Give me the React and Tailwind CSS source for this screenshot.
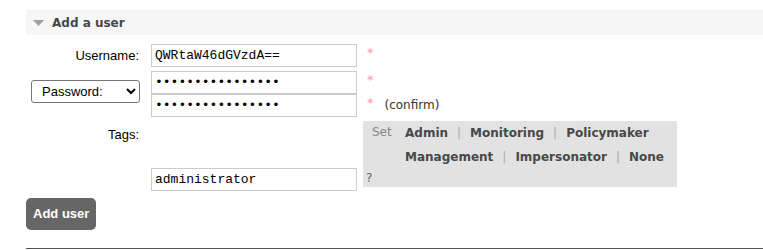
import React from 'react';

const Field = ({ type = 'text', value }) => (
    <input
        type={type}
        defaultValue={value}
        readOnly
        className="block w-[206px] h-[23px] border border-[#cccccc] bg-white px-[3px] text-[13px] text-black font-['Liberation_Mono',monospace] outline-none"
    />
);

const Star = () => <span className="text-[13px] text-[#f79a9a] leading-none font-['DejaVu_Sans',sans-serif]">*</span>;

const Sep = () => <span className="mx-[9px] font-normal text-[#aaaaaa]">|</span>;

export default function App() {
    return (
        <div className="w-[763px] h-[250px] bg-white pt-[10px] pl-[26px] overflow-hidden font-['Liberation_Sans',Arial,sans-serif] text-[13px] text-black">
            {/* Section header */}
            <div className="h-[25px] bg-[#f6f6f6] flex items-center pl-[7px]">
                <svg width="11" height="6" viewBox="0 0 11 6" className="mt-[1px]">
                    <polygon points="0,0 11,0 5.5,6" fill="#a0a0a0" />
                </svg>
                <span className="ml-[8px] font-['DejaVu_Sans',Verdana,sans-serif] font-bold text-[12px] text-[#484848]">Add a user</span>
            </div>

            {/* Username */}
            <div className="flex items-start h-[23px] mt-[9px]">
                <div className="w-[125px] pr-[12px] text-right h-[23px] leading-[24px]">Username:</div>
                <Field value="QWRtaW46dGVzdA==" />
                <div className="pl-[10px] pt-[2px] leading-none"><Star /></div>
            </div>

            {/* Password */}
            <div className="flex items-start h-[46px] mt-[4px]">
                <div className="w-[125px] pl-[5px] pt-[9px]">
                    <select className="block w-[109px] h-[23px] border border-[#767676] rounded-[3px] pl-[6px] text-[13px] bg-white appearance-auto">
                        <option>Password:</option>
                        <option>Hashed password:</option>
                        <option>No password</option>
                    </select>
                </div>
                <div className="flex flex-col">
                    <div className="flex items-start h-[23px]">
                        <Field type="password" value="QWRtaW46dGVzdA==" />
                        <div className="pl-[10px] pt-[2px] leading-none"><Star /></div>
                    </div>
                    <div className="flex items-start h-[23px]">
                        <Field type="password" value="QWRtaW46dGVzdA==" />
                        <div className="pl-[10px] pt-[2px] leading-none flex items-start">
                            <Star />
                            <span className="ml-[11px] mt-[2px] text-[12px] leading-[14px] text-[#333] font-['DejaVu_Sans',Verdana,sans-serif]">(confirm)</span>
                        </div>
                    </div>
                </div>
            </div>

            {/* Tags */}
            <div className="flex items-start h-[69px] mt-[4px]">
                <div className="w-[125px] pr-[12px] text-right pt-[6px] leading-[15px]">Tags:</div>
                <div className="w-[206px] pt-[47px]">
                    <Field value="administrator" />
                </div>
                <div className="ml-[6px] w-[314px] h-[66px] bg-[#e2e2e2] font-['DejaVu_Sans',Verdana,sans-serif] text-[12px]">
                    <div className="flex pl-[9px]">
                        <span className="w-[33px] shrink-0 text-[12px] text-[#888] leading-[22px]">Set</span>
                        <div className="font-bold text-[#484848] leading-[24px] whitespace-nowrap">
                            <div>Admin<Sep />Monitoring<Sep />Policymaker</div>
                            <div>Management<Sep />Impersonator<Sep />None</div>
                        </div>
                    </div>
                    <div className="pl-[3px] text-[12px] text-[#666] leading-[18px]">?</div>
                </div>
            </div>

            {/* Submit */}
            <button className="block mt-[8px] h-[32px] px-[7px] rounded-[5px] bg-[#666666] text-white font-bold text-[13px]">Add user</button>

            <div className="mt-[18px] h-px bg-[#555555]" />
        </div>
    );
}
